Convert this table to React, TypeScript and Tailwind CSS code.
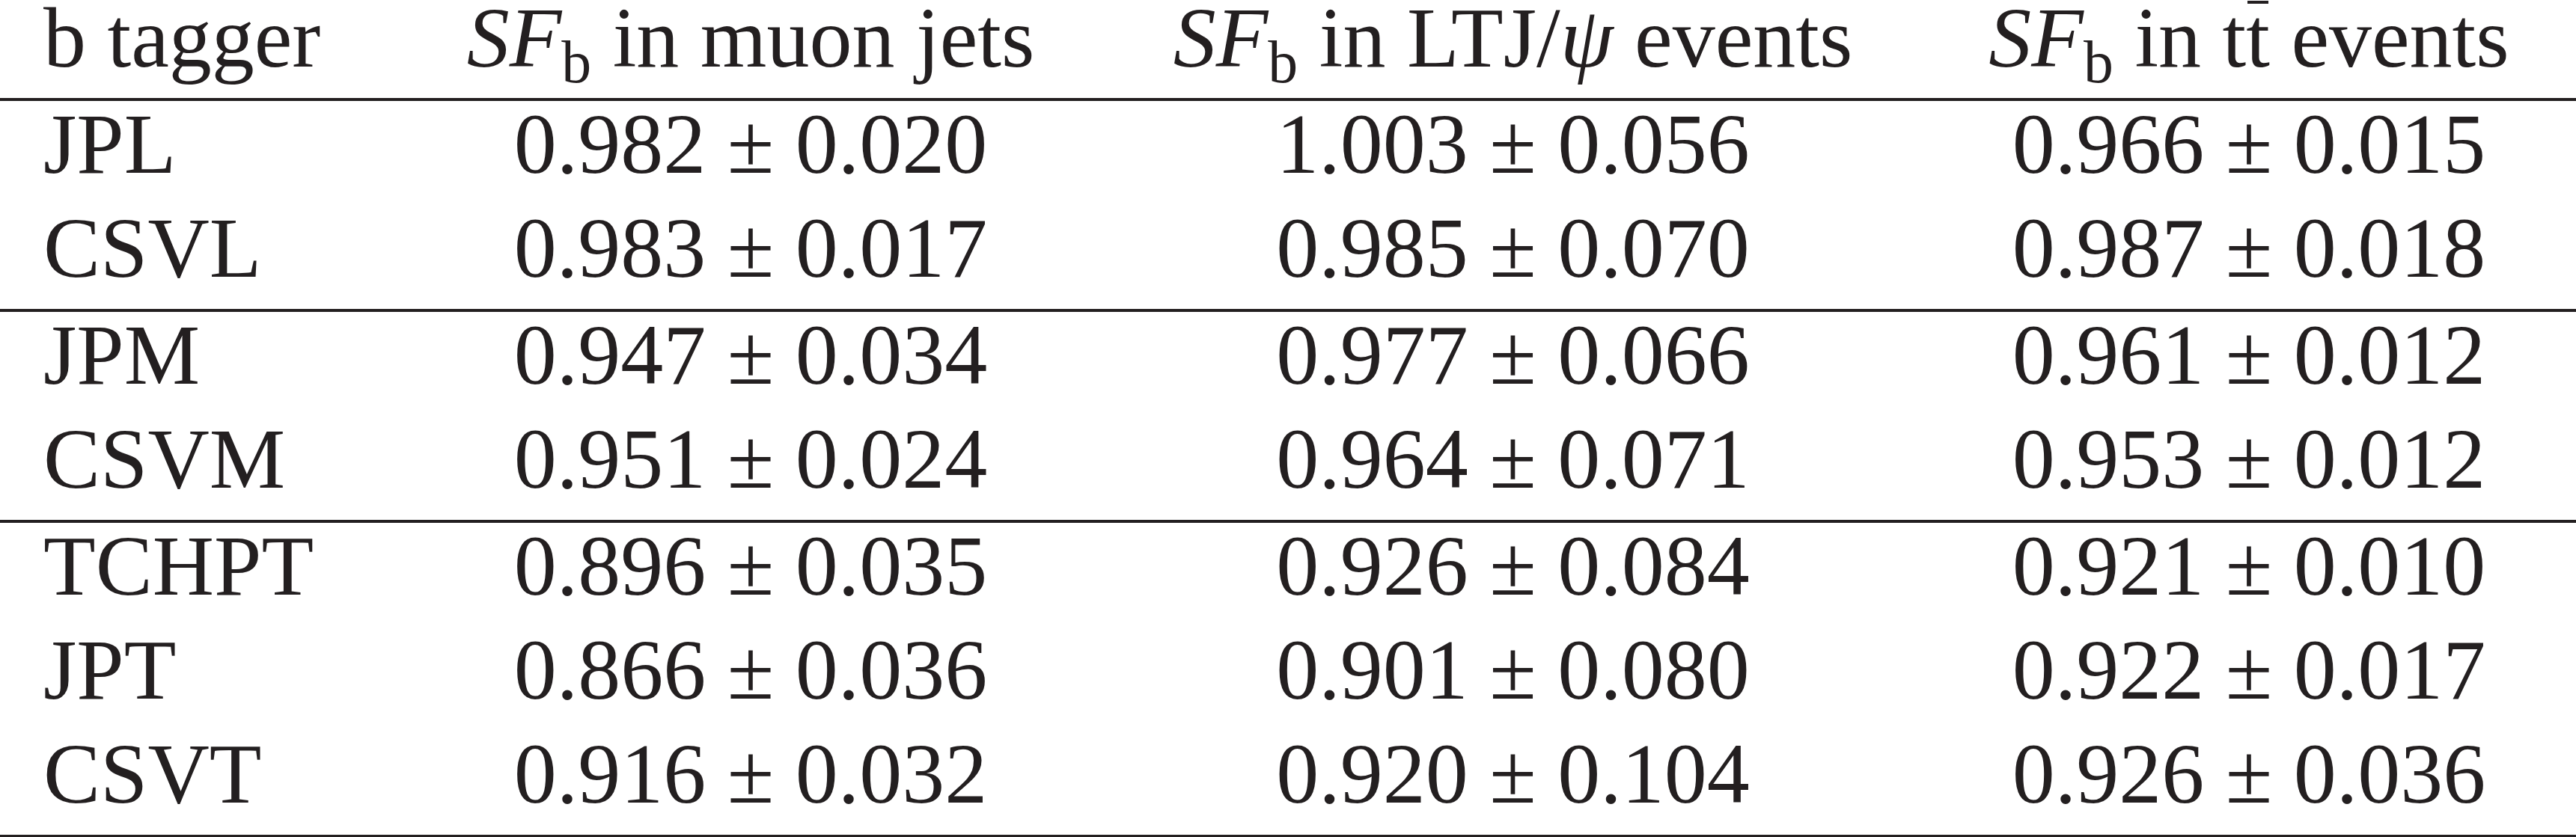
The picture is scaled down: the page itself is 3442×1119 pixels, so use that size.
const groups: [string, string, string, string][][] = [
  [
    ['JPL', '0.982 ± 0.020', '1.003 ± 0.056', '0.966 ± 0.015'],
    ['CSVL', '0.983 ± 0.017', '0.985 ± 0.070', '0.987 ± 0.018'],
  ],
  [
    ['JPM', '0.947 ± 0.034', '0.977 ± 0.066', '0.961 ± 0.012'],
    ['CSVM', '0.951 ± 0.024', '0.964 ± 0.071', '0.953 ± 0.012'],
  ],
  [
    ['TCHPT', '0.896 ± 0.035', '0.926 ± 0.084', '0.921 ± 0.010'],
    ['JPT', '0.866 ± 0.036', '0.901 ± 0.080', '0.922 ± 0.017'],
    ['CSVT', '0.916 ± 0.032', '0.920 ± 0.104', '0.926 ± 0.036'],
  ],
];

const cols = 'grid grid-cols-[531px_944px_1093px_874px]';

const SFb = () => (
  <>
    <span className="italic">SF</span>
    <span className="relative top-[21px] text-[0.7em]">b</span>
  </>
);

const Rule = () => <div className="h-[4px] w-full bg-[#231f20]" />;

export default function App() {
  return (
    <div className="w-[3442px] h-[1119px] overflow-hidden bg-white text-[#231f20] font-['Liberation_Serif',serif] text-[114px]">
      {/* header */}
      <div className={`${cols} h-[131px] leading-[101px] whitespace-nowrap`}>
        <div className="pl-[58px]">b tagger</div>
        <div className="text-center">
          <SFb /> in muon jets
        </div>
        <div className="text-center">
          <SFb /> in LTJ/<span className="italic">ψ</span> events
        </div>
        <div className="text-center">
          <SFb /> in t
          <span className="relative inline-block">
            t
            <span className="absolute left-[2px] right-[2px] top-[1px] h-[4px] bg-[#231f20]" />
          </span>{' '}
          events
        </div>
      </div>
      <Rule />

      {groups.map((rows, gi) => (
        <div key={gi}>
          {rows.map((r) => (
            <div key={r[0]} className={`${cols} h-[139px] leading-[115px] whitespace-nowrap`}>
              <div className="pl-[58px]">{r[0]}</div>
              <div className="text-center">{r[1]}</div>
              <div className="text-center">{r[2]}</div>
              <div className="text-center">{r[3]}</div>
            </div>
          ))}
          <Rule />
        </div>
      ))}
    </div>
  );
}
